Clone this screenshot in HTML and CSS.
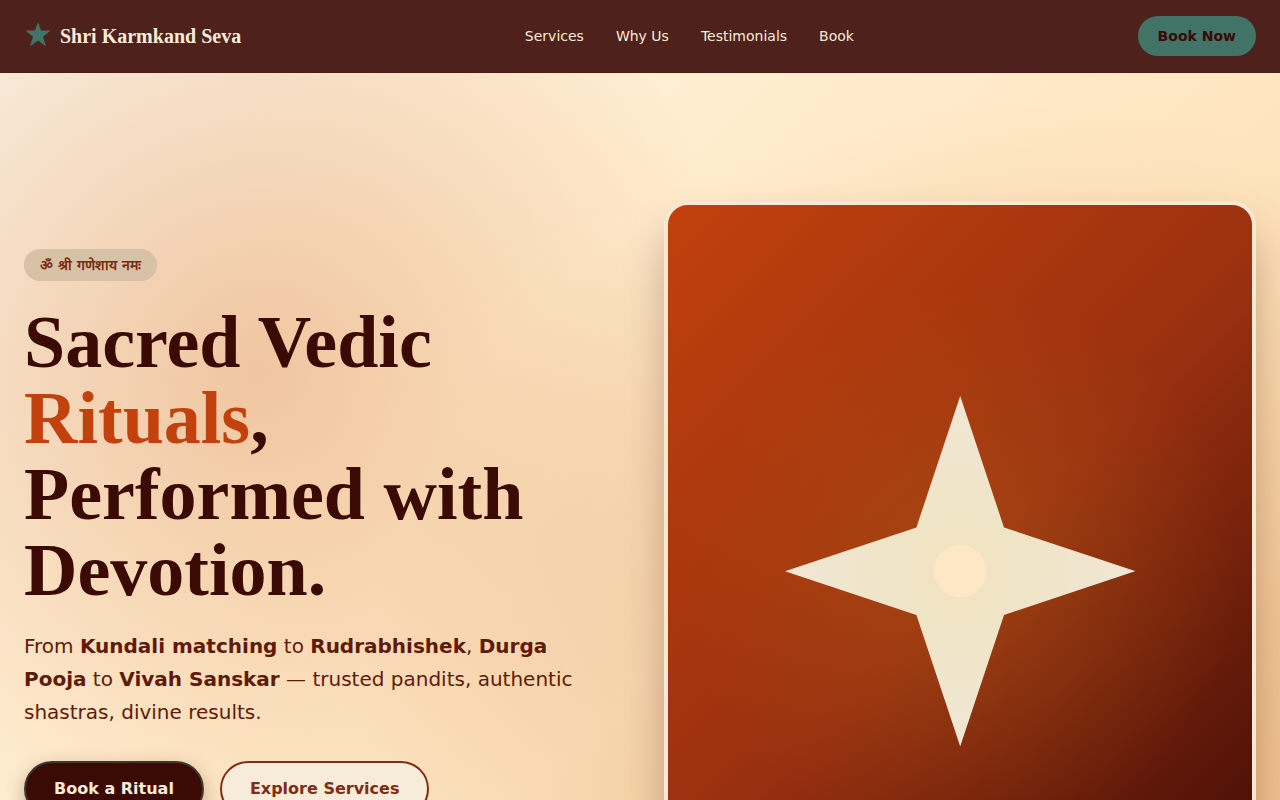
FILE: index.html
```
<!DOCTYPE html>
<html lang="en">
<head>
  <meta charset="UTF-8" />
  <meta name="viewport" content="width=device-width, initial-scale=1.0" />
  <title>Shri Karmkand Seva</title>
  <link rel="stylesheet" href="styles.css">
</head>
<body>

  <header class="site-header">
    <a class="brand" href="#top">
      <svg class="brand-icon" viewBox="0 0 28 28" aria-hidden="true">
        <polygon points="14,0 17,8.4 26.5,8.4 19,14.8 22,24.2 14,18.6 6,24.2 9,14.8 1.5,8.4 11,8.4" />
      </svg>
      <span>Shri Karmkand Seva</span>
    </a>
    <nav class="nav">
      <a href="#services">Services</a>
      <a href="#why">Why Us</a>
      <a href="#testimonials">Testimonials</a>
      <a href="#book">Book</a>
    </nav>
    <button class="book-now" type="button">Book Now</button>
  </header>

  <!-- Hero -->
  <main class="hero" id="top">
    <div class="hero-copy">
      <span class="badge" lang="sa">ॐ श्री गणेशाय नमः</span>
      <h1>Sacred Vedic <span class="accent">Rituals</span>, Performed with Devotion.</h1>
      <p class="lead">From <strong>Kundali matching</strong> to <strong>Rudrabhishek</strong>, <strong>Durga Pooja</strong> to <strong>Vivah Sanskar</strong> — trusted pandits, authentic shastras, divine results.</p>
      <div class="actions">
        <button class="btn btn-primary" type="button">Book a Ritual</button>
        <button class="btn btn-outline" type="button">Explore Services</button>
      </div>
    </div>
    <div class="hero-art">
      <svg class="star" viewBox="0 0 200 200" aria-hidden="true">
        <defs>
          <radialGradient id="glow">
            <stop offset="0" stop-color="#f0e3bf" />
            <stop offset="1" stop-color="#f0e7d5" />
          </radialGradient>
        </defs>
        <polygon fill="url(#glow)" points="100,0 125,75 200,100 125,125 100,200 75,125 0,100 75,75" />
        <circle cx="100" cy="100" r="15" fill="#ffe6c4" />
      </svg>
    </div>
  </main>

</body>
</html>
```
FILE: styles.css
```
* {
  box-sizing: border-box;
}

body {
  margin: 0;
  font-family: "DejaVu Sans", sans-serif;
  color: #3b0a05;
  background: #ffedd0;
}

a {
  color: inherit;
  text-decoration: none;
}

button {
  font-family: inherit;
  font-weight: bold;
  cursor: pointer;
}

.site-header {
  display: flex;
  align-items: center;
  justify-content: space-between;
  padding: 16px 24px;
  background: #4e211c;
  border-bottom: 1px solid #4a1d18;
  color: #f9ebd7;
}

.brand {
  display: flex;
  align-items: center;
  gap: 8px;
  font-family: "Liberation Serif", serif;
  font-size: 20px;
  font-weight: bold;
}

.brand-icon {
  width: 28px;
  height: 28px;
  fill: #417466;
}

.nav {
  display: flex;
  gap: 32px;
  font-size: 14px;
}

.book-now {
  padding: 10px 20px;
  border: none;
  border-radius: 20px;
  background: #417466;
  color: #3b0a05;
  font-size: 14px;
  line-height: 20px;
}

.hero {
  display: grid;
  grid-template-columns: 1fr 1fr;
  gap: 48px;
  padding: 128px 24px;
  background:
    radial-gradient(circle at 20% 30%, rgba(200, 80, 12, 0.26), transparent 40%),
    radial-gradient(circle at 80% 70%, rgba(180, 90, 20, 0.32), transparent 54%),
    linear-gradient(135deg, #faf1e2, #ffedcf 33%, #fed7a5);
}

.hero-copy {
  padding-top: 48px;
}

.badge {
  display: inline-block;
  padding: 0 16px;
  border-radius: 16px;
  background: #d7c1a7;
  color: #7c2d12;
  font-size: 14px;
  font-weight: bold;
  line-height: 32px;
}

h1 {
  margin: 23px 0 22px;
  font-family: "Liberation Serif", serif;
  font-size: 74px;
  font-weight: bold;
  line-height: 76px;
}

.accent {
  color: #c2410c;
}

.lead {
  max-width: 576px;
  margin: 0 0 32px;
  color: #5f1a0a;
  font-size: 20px;
  line-height: 33px;
}

.actions {
  display: flex;
  gap: 16px;
}

.btn {
  padding: 16px 28px;
  border: 2px solid #7c2d12;
  border-radius: 28px;
  font-size: 16px;
  line-height: 20px;
}

.btn-primary {
  border-color: #3f3a2e;
  background: #3b0a05;
  color: #f9ebd7;
  box-shadow: 0 8px 20px rgba(59, 10, 5, 0.3);
}

.btn-outline {
  background: #f7ebda;
  color: #7c2d12;
}

.hero-art {
  display: flex;
  align-items: center;
  justify-content: center;
  aspect-ratio: 4 / 5;
  border: 4px solid #f5e9d6;
  border-radius: 24px;
  background:
    radial-gradient(circle, rgba(190, 120, 25, 0.28), transparent 60%),
    linear-gradient(135deg, #c2410c, #9a3010 50%, #3b0a05);
  box-shadow: 0 24px 48px -12px rgba(59, 10, 5, 0.4);
}

.star {
  width: 60%;
}
```
